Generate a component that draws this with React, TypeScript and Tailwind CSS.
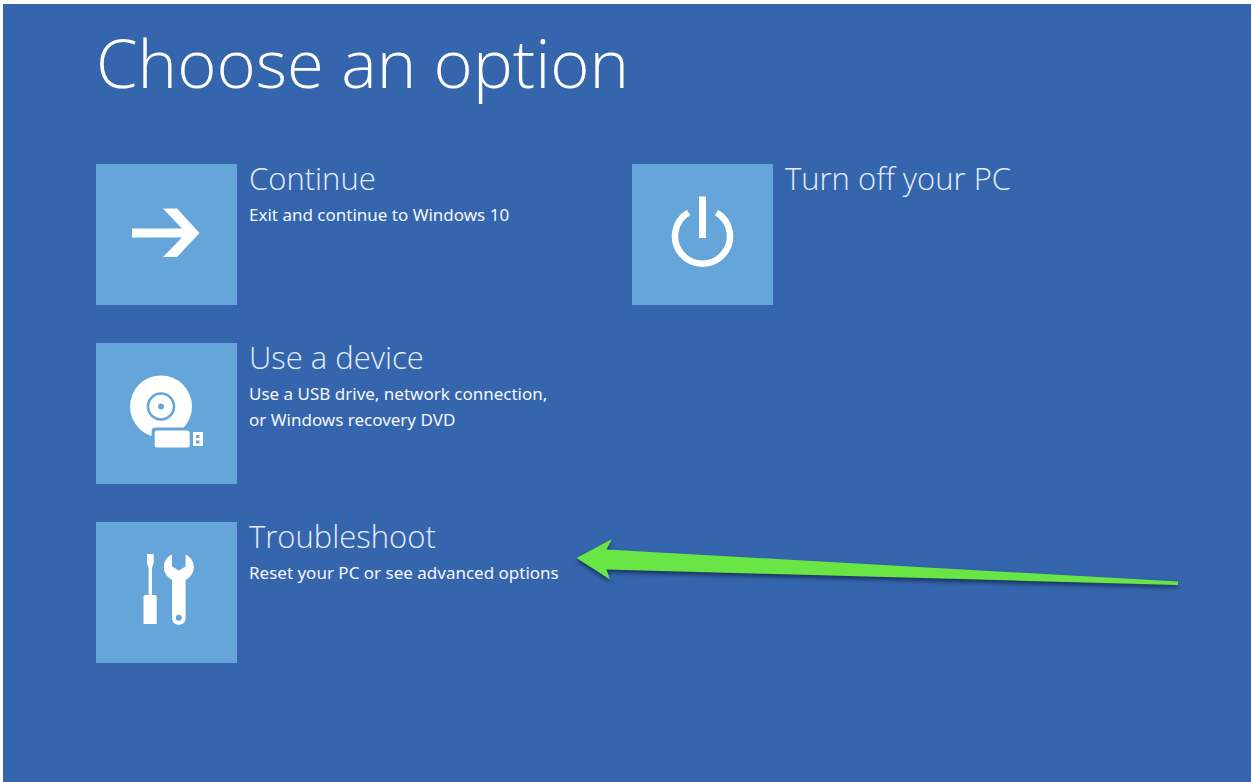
// App.tsx
// Recovery start screen: a heading and a grid of large option tiles.

import type { ReactNode } from "react";

function ArrowIcon() {
  return (
    <svg viewBox="0 0 141 141" className="size-full" fill="#fff" aria-hidden="true">
      <path d="M36 64.5H86L67 44.5H81L103.5 69L81 93H67L86 73.5H36Z" />
    </svg>
  );
}

function PowerIcon() {
  return (
    <svg viewBox="0 0 141 141" className="size-full" fill="none" stroke="#fff" aria-hidden="true">
      <path d="M56.5 48.5A27.5 27.5 0 1 0 84.5 48.5" strokeWidth="6.5" />
      <path d="M70.5 32.5V74" strokeWidth="7" />
    </svg>
  );
}

function DeviceIcon() {
  return (
    <svg viewBox="0 0 141 141" className="size-full" fill="#fff" aria-hidden="true">
      <circle cx="65" cy="63.5" r="31" />
      <circle cx="65" cy="63.5" r="13" fill="none" stroke="#66a5d9" strokeWidth="2.6" />
      <circle cx="65" cy="63.5" r="3" fill="#66a5d9" />
      {/* The gap between the disc and the drive is painted in the tile colour. */}
      <rect x="55.5" y="84.5" width="52" height="24" rx="4" fill="#66a5d9" />
      <rect x="58.7" y="87.5" width="35" height="17" rx="2.5" />
      <path
        fillRule="evenodd"
        d="M97 89H107V103H97ZM100 92V95H103.5V92ZM100 97.5V100.5H103.5V97.5Z"
      />
    </svg>
  );
}

function ToolsIcon() {
  return (
    <svg viewBox="0 0 141 141" className="size-full" fill="#fff" aria-hidden="true">
      <path d="M51 32H57.7V41L56 46V73H59C60 73 60.7 74 60.7 75V102H47.5V75C47.5 74 48 73 49.3 73H52.6V46L51 41Z" />
      <path
        fillRule="evenodd"
        d="M76 32.5V44.5L82.8 48.5L89.6 44.5V32.5C94.5 34.8 97.8 39.5 97.8 45C97.8 50.5 94.7 55 89.6 58V96C89.6 100 86.5 102.8 82.8 102.8C79 102.8 76 100 76 96V58C71 55 67.8 50.5 67.8 45C67.8 39.5 71 34.8 76 32.5ZM82.8 92.8A3 3 0 1 0 82.8 98.8A3 3 0 1 0 82.8 92.8Z"
      />
    </svg>
  );
}

type OptionProps = {
  icon: ReactNode;
  title: string;
  children?: ReactNode;
};

function Option({ icon, title, children }: OptionProps) {
  return (
    <button type="button" className="flex w-full items-start gap-3 text-left">
      <span className="size-[141px] shrink-0 bg-[#66a5d9]">{icon}</span>
      <span className="block">
        <span className="block text-[31px] leading-7 font-light text-[#e4ecf8]">{title}</span>
        {children && (
          <span className="mt-2.5 block font-['Noto_Sans',sans-serif] text-[17px] leading-[26px] text-[#f4f7fc]">
            {children}
          </span>
        )}
      </span>
    </button>
  );
}

export default function App() {
  return (
    <div className="min-h-screen bg-white pt-1 pl-[3px] pr-px flex flex-col font-['Open_Sans',sans-serif]">
      <main className="relative grow overflow-hidden bg-[#3566ad] pt-5 pr-[83px] pb-8 pl-[93px]">
        <h1 className="text-[67px] leading-[76px] font-light text-white">Choose an option</h1>

        <div className="mt-16 grid grid-cols-2">
          {/* The left column holds the ways to carry on or repair. */}
          <div className="flex flex-col gap-[38px]">
            <Option icon={<ArrowIcon />} title="Continue">
              Exit and continue to Windows 10
            </Option>
            <Option icon={<DeviceIcon />} title="Use a device">
              Use a USB drive, network connection,
              <br />
              or Windows recovery DVD
            </Option>
            <Option icon={<ToolsIcon />} title="Troubleshoot">
              Reset your PC or see advanced options
            </Option>
          </div>

          <div>
            <Option icon={<PowerIcon />} title="Turn off your PC" />
          </div>
        </div>

        {/* Pointer laid over the page, aimed at Troubleshoot. */}
        <svg
          viewBox="0 0 620 70"
          className="pointer-events-none absolute top-[526px] left-[564px] h-[70px] w-[620px] drop-shadow-[0_3px_2px_rgba(10,25,60,0.65)]"
          aria-hidden="true"
        >
          <path d="M9.5 28L45 9L39.5 19.5L611 51.5V55L39.5 39.5L43 49.5Z" fill="#69e545" />
        </svg>
      </main>
    </div>
  );
}
